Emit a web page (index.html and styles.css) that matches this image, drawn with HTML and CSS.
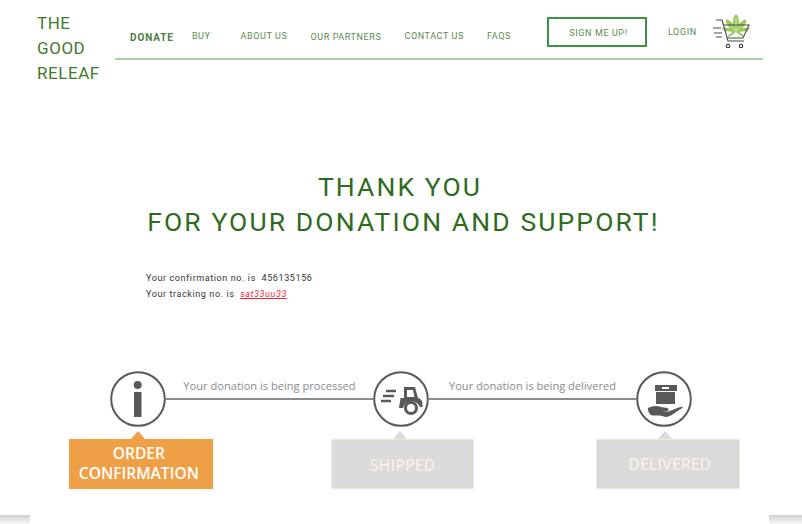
FILE: index.html
```html
<!DOCTYPE html>
<html>
  <head>
    <meta charset="utf-8">
    <title>The Good Releaf</title>
    <link rel="stylesheet" href="styles.css">
  </head>
  <body>
    <div class="page">
      <div class="topbar">
        <a class="logo">THE<br>GOOD<br>RELEAF</a>
        <div class="nav">
          <a class="nav-link donate">DONATE</a>
          <a class="nav-link buy">BUY</a>
          <a class="nav-link about">ABOUT US</a>
          <a class="nav-link partners">OUR PARTNERS</a>
          <a class="nav-link contact">CONTACT US</a>
          <a class="nav-link faqs">FAQS</a>
          <a class="signup">SIGN ME UP!</a>
          <a class="nav-link login">LOGIN</a>
          <svg class="cart" width="38" height="36" viewBox="0 0 38 36">
            <g fill="#9ccb5a">
              <ellipse cx="23" cy="8.500" rx="3" ry="8"/>
              <ellipse cx="23" cy="9.500" rx="2.500" ry="7.500" transform="rotate(42 23 17)"/>
              <ellipse cx="23" cy="9.500" rx="2.500" ry="7.500" transform="rotate(-42 23 17)"/>
              <ellipse cx="23" cy="10" rx="1.800" ry="7" transform="rotate(80 23 17)"/>
              <ellipse cx="23" cy="10" rx="1.800" ry="7" transform="rotate(-80 23 17)"/>
              <ellipse cx="23" cy="12" rx="1.200" ry="5" transform="rotate(125 23 17)"/>
              <ellipse cx="23" cy="12" rx="1.200" ry="5" transform="rotate(-125 23 17)"/>
            </g>
            <path d="M23 4v17M23 17l-5-5M23 17l5-5" stroke="#e8f4d8" stroke-width=".7" fill="none"/>
            <path d="M3 6h6l6 21h16" stroke="#4a4a4a" stroke-width="1.100" fill="none"/>
            <path d="M11 11h25l-6 13H14" stroke="#4a4a4a" stroke-width="1.100" fill="none"/>
            <path d="M0 14h8M1 19h8M3 23h6" stroke="#4a4a4a" stroke-width="1.100" fill="none"/>
            <circle cx="15" cy="32" r="1.700" fill="none" stroke="#333" stroke-width="1.100"/>
            <circle cx="28" cy="32" r="1.700" fill="none" stroke="#333" stroke-width="1.100"/>
          </svg>
        </div>
      </div>

      <h1 class="thanks"><span class="thanks-top">THANK YOU</span><br>FOR YOUR DONATION AND SUPPORT!</h1>

      <div class="order-info">
        <p>Your confirmation no. is&nbsp; 456135156</p>
        <p>Your tracking no. is&nbsp; <a class="tracking">sat33uu33</a></p>
      </div>

      <div class="tracker">
        <div class="step-row">
          <svg class="step-icon" width="56" height="56" viewBox="0 0 56 56">
            <circle cx="28" cy="28" r="26.800" fill="#fff" stroke="#595959" stroke-width="2"/>
            <circle cx="27.700" cy="14" r="4" fill="#595959"/>
            <rect x="24" y="21" width="7.500" height="25" fill="#595959"/>
          </svg>
          <div class="step-line"><span>Your donation is being processed</span></div>
          <svg class="step-icon" width="56" height="56" viewBox="0 0 56 56">
            <circle cx="28" cy="28" r="26.800" fill="#fff" stroke="#595959" stroke-width="2"/>
            <path d="M31 16h11l3 11c3 .5 4.500 3 4.500 7v2h-2.500a9 9 0 0 0-17 1H26l1.500-10H31z" fill="#595959"/>
            <path d="M34 19h6l1.500 7H34z" fill="#fff"/>
            <circle cx="38" cy="37" r="5.500" fill="#fff" stroke="#595959" stroke-width="3"/>
            <path d="M13 20h10M10 25h11M8 30h10" stroke="#595959" stroke-width="2.600"/>
          </svg>
          <div class="step-line"><span>Your donation is being delivered</span></div>
          <svg class="step-icon" width="56" height="56" viewBox="0 0 56 56">
            <circle cx="28" cy="28" r="26.800" fill="#fff" stroke="#595959" stroke-width="2"/>
            <rect x="19" y="14" width="22" height="6" fill="#595959"/>
            <rect x="20" y="21" width="19" height="12" fill="#595959"/>
            <rect x="26" y="16" width="7" height="2" fill="#fff"/>
            <path d="M12 37c4-2 9-3 13-1l6 1c2 .5 2 2.500 0 3h-5l6 .5c4-1 9-4 15-5 0 1-1 2-3 3-5 3-9 7-14 7.500l-6-1.500h-7c-3 0-5-3-5-7z" fill="#595959"/>
          </svg>
        </div>
        <div class="label-row">
          <div class="step-label active">ORDER<br>CONFIRMATION</div>
          <div class="step-label shipped">SHIPPED</div>
          <div class="step-label delivered">DELIVERED</div>
        </div>
      </div>
    </div>
  </body>
</html>
```

FILE: styles.css
```css
html, body {
  margin: 0;
  height: 524px;
  overflow: hidden;
}

body {
  font-family: Roboto, Arial, sans-serif;
  color: #2f6b1e;
  background: linear-gradient(to bottom, #ffffff 515px, #cfcfcf 515px, #f8f8f8 524px);
}

.page {
  width: 739px;
  height: 524px;
  margin-left: 30px;
  background-color: #ffffff;
}

a {
  text-decoration: none;
}

/* header */
.topbar {
  display: flex;
  margin-left: -30px;
  margin-right: 6px;
  padding-left: 37px;
}

.logo {
  flex: none;
  width: 78px;
  padding-top: 11px;
  font-size: 17px;
  line-height: 25px;
  letter-spacing: .55px;
  color: #3f7a2c;
}

.nav {
  flex: 1;
  height: 58px;
  border-bottom: 2px solid #a9d3a9;
  display: flex;
}

.nav-link {
  font-size: 9px;
  letter-spacing: .6px;
  color: #5b8a4c;
  padding-top: 31px;
  line-height: 11px;
}

.donate {
  margin-left: 15px;
  font-size: 10px;
  font-weight: bold;
  letter-spacing: .9px;
  padding-top: 32px;
  color: #4b7f3b;
}

.buy { margin-left: 18px; }
.about { margin-left: 30px; }
.partners { margin-left: 23px; padding-top: 32px; }
.contact { margin-left: 23px; }
.faqs { margin-left: 23px; }

.signup {
  box-sizing: border-box;
  width: 100px;
  height: 30px;
  margin: 17px 0 0 36px;
  padding-left: 3px;
  border: 2px solid #3f9142;
  font-size: 9px;
  letter-spacing: .6px;
  line-height: 28px;
  text-align: center;
  color: #5b8a4c;
}

.login {
  margin-left: 21px;
  padding-top: 27px;
}

.cart {
  margin: 14px 0 0 16px;
}

/* thank you */
.thanks {
  margin: 83px 0 0;
  padding-left: 8px;
  font-size: 26.500px;
  font-weight: normal;
  line-height: 35px;
  letter-spacing: 2.100px;
  text-align: center;
  color: #2f6b1e;
}

.thanks-top {
  padding-right: 7px;
}

.order-info {
  margin: 31px 0 0 116px;
  font-size: 9px;
  letter-spacing: .6px;
  line-height: 16px;
  color: #333333;
}

.order-info p {
  margin: 0;
}

.tracking {
  color: #ee2a35;
  font-style: italic;
  text-decoration: underline;
}

/* progress */
.tracker {
  margin: 69px 0 0 39px;
  width: 671px;
}

.step-row {
  display: flex;
  align-items: center;
  margin-left: 41px;
  margin-right: 48px;
}

.step-icon {
  flex: none;
}

.step-line {
  flex: 1;
  height: 2px;
  background-color: #8c8c8c;
  position: relative;
}

.step-line span {
  position: absolute;
  left: 0;
  right: 0;
  bottom: 7px;
  text-align: center;
  font-family: "Open Sans", sans-serif;
  font-size: 11.100px;
  white-space: nowrap;
  color: #8a8a8a;
}

.label-row {
  display: flex;
  margin-top: 12px;
}

.step-label {
  position: relative;
  box-sizing: border-box;
  width: 144px;
  height: 50px;
  background-color: #dbdbdb;
  border: 1px solid #f3e6d4;
  font-family: "Open Sans", sans-serif;
  font-size: 15.800px;
  font-weight: 600;
  line-height: 20px;
  display: flex;
  align-items: center;
  justify-content: center;
  text-align: center;
  color: #f7efe3;
}

.step-label::before {
  content: "";
  position: absolute;
  top: -9px;
  left: 61px;
  border-left: 7px solid transparent;
  border-right: 7px solid transparent;
  border-bottom: 8px solid #dbdbdb;
}

.step-label.active {
  padding-bottom: 2px;
  padding-right: 4px;
  background-color: #ef9f45;
  border-color: #ef9f45;
  color: #ffffff;
  font-size: 15.600px;
}

.step-label.active::before {
  border-bottom-color: #ef9f45;
}

.shipped {
  margin-left: 118px;
  padding-top: 2px;
}

.delivered {
  margin-left: 122px;
  padding-left: 3px;
}
```
